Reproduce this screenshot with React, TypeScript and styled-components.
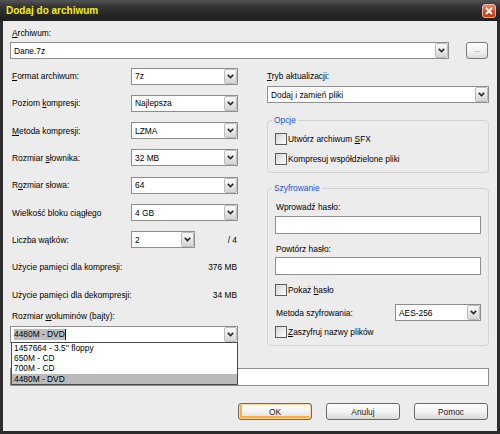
import React from "react";
import styled, { createGlobalStyle } from "styled-components";

const GlobalStyle = createGlobalStyle`
  html, body {
    margin: 0;
    padding: 0;
    background: #fff;
  }
  body {
    font-family: "Liberation Sans", Arial, sans-serif;
    font-size: 8.4px;
    color: #000;
  }
  * {
    box-sizing: border-box;
  }
`;

const Window = styled.div`
  width: 500px;
  height: 434px;
  display: flex;
  flex-direction: column;
  background: #2c2c2c;
`;

const TitleBar = styled.div`
  height: 21px;
  flex: none;
  display: flex;
  align-items: center;
  justify-content: space-between;
  padding: 0 4px 0 6px;
  background: linear-gradient(#545454 0%, #353535 30%, #262626 70%, #1f1f1f 100%);
`;

const Title = styled.span`
  font-size: 10px;
  font-weight: 700;
  color: #f4ee1a;
`;

const CloseButton = styled.span`
  width: 14px;
  height: 14px;
  border-radius: 3px;
  border: 1px solid #f0b4a0;
  background: linear-gradient(#f08a64, #d6451f 60%, #c63a14);
  display: flex;
  align-items: center;
  justify-content: center;
`;

const Body = styled.div`
  flex: 1;
  margin: 0 3px 3px;
  background: #ececec;
  padding: 6px 8px 0 7px;
  display: flex;
  flex-direction: column;
`;

const Caption = styled.div<{ $indent?: number }>`
  height: 12px;
  line-height: 12px;
  white-space: nowrap;
  padding-left: ${(p) => p.$indent ?? 2}px;
`;

const Key = styled.u`
  text-decoration: underline;
  text-underline-offset: 1px;
`;

const ArchiveRow = styled.div`
  margin-top: 3px;
  display: flex;
  align-items: center;
  gap: 17px;
`;

const ComboFrame = styled.div<{ $width?: number }>`
  height: 17px;
  width: ${(p) => (p.$width ? `${p.$width}px` : "100%")};
  flex: none;
  display: flex;
  align-items: center;
  background: #fff;
  border: 1px solid #8e8e8e;
  padding-left: 3px;
`;

const ComboText = styled.span`
  flex: 1;
  line-height: 12px;
  white-space: nowrap;
  overflow: hidden;
  display: flex;
  align-items: center;
`;

const ComboArrow = styled.span`
  width: 13px;
  height: 15px;
  flex: none;
  border: 1px solid #bcbcbc;
  border-radius: 2px;
  background: linear-gradient(#fbfbfb, #e4e4e4 60%, #d4d4d4);
  display: flex;
  align-items: center;
  justify-content: center;
`;

const Selection = styled.span`
  background: #bdbdbd;
  line-height: 11px;
  padding: 0 0 0 1px;
  margin-left: -1px;
`;

const Caret = styled.span`
  width: 1px;
  height: 11px;
  background: #000;
`;

const BrowseButton = styled.div`
  width: 22px;
  height: 17px;
  border: 1px solid #7a7a7a;
  border-radius: 3px;
  background: linear-gradient(#ffffff, #ececec 70%, #d9d9d9);
  display: flex;
  align-items: center;
  justify-content: center;
  color: #555;
  font-size: 7px;
  padding-bottom: 2px;
`;

const Columns = styled.div`
  margin-top: 8px;
  display: grid;
  grid-template-columns: 228px 222px;
  column-gap: 29px;
  align-items: start;
`;

const LeftColumn = styled.div`
  display: flex;
  flex-direction: column;
`;

const SettingList = styled.div`
  display: flex;
  flex-direction: column;
  gap: 9.33px;
`;

const SettingRow = styled.div`
  height: 18px;
  display: grid;
  grid-template-columns: 1fr 107px;
  align-items: center;
`;

const InfoRow = styled.div`
  height: 18px;
  display: flex;
  align-items: center;
  justify-content: space-between;
`;

const ThreadControl = styled.div`
  display: flex;
  align-items: center;
  justify-content: space-between;
`;

const Value = styled.span`
  line-height: 12px;
  white-space: nowrap;
  padding-right: 1px;
`;

const VolumeCaption = styled(Caption)`
  margin-top: 6.3px;
`;

const VolumeField = styled.div`
  margin-top: 4px;
  position: relative;
`;

const DropList = styled.ul`
  position: absolute;
  z-index: 5;
  top: 16px;
  left: 1px;
  right: 0;
  margin: 0;
  padding: 0;
  list-style: none;
  background: #fff;
  border: 1px solid #4a4a4a;
`;

const DropItem = styled.li<{ $selected?: boolean }>`
  height: 10.25px;
  line-height: 10.25px;
  padding-left: 2px;
  white-space: nowrap;
  background: ${(p) => (p.$selected ? "#bababa" : "transparent")};
`;

const RightColumn = styled.div`
  padding-top: 3px;
  display: flex;
  flex-direction: column;
`;

const UpdateCombo = styled.div`
  margin-top: 4px;
`;

const Group = styled.fieldset<{ $gap: number }>`
  margin: ${(p) => p.$gap}px 0 0;
  padding: 7px 7px 7px 7px;
  border: 1px solid #d2d2d2;
  border-radius: 4px;
  min-inline-size: 0;
  display: flex;
  flex-direction: column;
`;

const Legend = styled.legend`
  color: #1e55d6;
  line-height: 12px;
  height: 12px;
  padding: 0 2px;
  margin-left: -3px;
`;

const CheckRow = styled.label<{ $top?: number }>`
  height: 12px;
  margin-top: ${(p) => p.$top ?? 0}px;
  display: flex;
  align-items: center;
  line-height: 12px;
  white-space: nowrap;
`;

const CheckBox = styled.span`
  width: 12px;
  height: 12px;
  flex: none;
  margin-right: 1px;
  border: 1px solid #5b5b5b;
  background: linear-gradient(135deg, #d5d5d5, #f2f2f2 70%, #fdfdfd);
`;

const FieldCaption = styled(Caption)<{ $top?: number }>`
  padding-left: 1px;
  margin-top: ${(p) => p.$top ?? 0}px;
`;

const TextBox = styled.div<{ $top?: number }>`
  height: 18px;
  margin-top: ${(p) => p.$top ?? 0}px;
  background: #fff;
  border: 1px solid #8e8e8e;
`;

const MethodRow = styled.div`
  margin-top: 8px;
  height: 17px;
  display: grid;
  grid-template-columns: 1fr 86px;
  align-items: center;
`;

/* the "Parametry:" caption sits under the open drop-down list */
const ParamsSpacer = styled.div`
  height: 12px;
  margin-top: 6px;
`;

const Footer = styled.div`
  margin-top: 17px;
  padding-right: 1px;
  display: flex;
  justify-content: flex-end;
  gap: 14px;
`;

const Button = styled.div<{ $default?: boolean }>`
  width: 74px;
  height: 17px;
  border: 1px solid #6a6a6a;
  border-radius: 3px;
  background: linear-gradient(#ffffff, #f3f3f3 50%, #e2e2e2 85%, #d3d3d3);
  display: flex;
  align-items: center;
  justify-content: center;
  color: #1a1a1a;
  box-shadow: ${(p) =>
    p.$default ? "inset 0 0 0 1px #fcd79a, inset 1px -1px 0 2px #f5b04a" : "none"};
`;

const Chevron = () => (
  <svg width="7" height="5" viewBox="0 0 7 5">
    <path d="M0.8 0.9 L3.5 3.6 L6.2 0.9" fill="none" stroke="#2a2a2a" strokeWidth="1.6" />
  </svg>
);

const Combo = ({ value, width }: { value: React.ReactNode; width?: number }) => (
  <ComboFrame $width={width}>
    <ComboText>{value}</ComboText>
    <ComboArrow>
      <Chevron />
    </ComboArrow>
  </ComboFrame>
);

const Check = ({ children, top }: { children: React.ReactNode; top?: number }) => (
  <CheckRow $top={top}>
    <CheckBox />
    <span>{children}</span>
  </CheckRow>
);

const volumeSizes = ["1457664 - 3.5'' floppy", "650M - CD", "700M - CD", "4480M - DVD"];

const App = () => {
  return (
    <Window>
      <GlobalStyle />
      <TitleBar>
        <Title>Dodaj do archiwum</Title>
        <CloseButton>
          <svg width="8" height="8" viewBox="0 0 8 8">
            <path d="M1 1 L7 7 M7 1 L1 7" stroke="#fff" strokeWidth="1.8" />
          </svg>
        </CloseButton>
      </TitleBar>
      <Body>
        <Caption>
          <Key>A</Key>rchiwum:
        </Caption>
        <ArchiveRow>
          <Combo value="Dane.7z" width={439} />
          <BrowseButton>...</BrowseButton>
        </ArchiveRow>

        <Columns>
          <LeftColumn>
            <SettingList>
              <SettingRow>
                <Caption>
                  <Key>F</Key>ormat archiwum:
                </Caption>
                <Combo value="7z" />
              </SettingRow>
              <SettingRow>
                <Caption>
                  Poziom <Key>k</Key>ompresji:
                </Caption>
                <Combo value="Najlepsza" />
              </SettingRow>
              <SettingRow>
                <Caption>
                  <Key>M</Key>etoda kompresji:
                </Caption>
                <Combo value="LZMA" />
              </SettingRow>
              <SettingRow>
                <Caption>
                  Rozmiar <Key>s</Key>łownika:
                </Caption>
                <Combo value="32 MB" />
              </SettingRow>
              <SettingRow>
                <Caption>
                  R<Key>o</Key>zmiar słowa:
                </Caption>
                <Combo value="64" />
              </SettingRow>
              <SettingRow>
                <Caption>Wielkość bloku ciągłego</Caption>
                <Combo value="4 GB" />
              </SettingRow>
              <SettingRow>
                <Caption>Liczba wątków:</Caption>
                <ThreadControl>
                  <Combo value="2" width={64} />
                  <Value>/ 4</Value>
                </ThreadControl>
              </SettingRow>
              <InfoRow>
                <Caption>Użycie pamięci dla kompresji:</Caption>
                <Value>376 MB</Value>
              </InfoRow>
              <InfoRow>
                <Caption>Użycie pamięci dla dekompresji:</Caption>
                <Value>34 MB</Value>
              </InfoRow>
            </SettingList>

            <VolumeCaption>
              Rozmiar <Key>w</Key>oluminów (bajty):
            </VolumeCaption>
            <VolumeField>
              <Combo
                value={
                  <>
                    <Selection>4480M - DVD</Selection>
                    <Caret />
                  </>
                }
              />
              <DropList>
                {volumeSizes.map((size, i) => (
                  <DropItem key={size} $selected={i === volumeSizes.length - 1}>
                    {size}
                  </DropItem>
                ))}
              </DropList>
            </VolumeField>
          </LeftColumn>

          <RightColumn>
            <Caption $indent={0}>
              <Key>T</Key>ryb aktualizacji:
            </Caption>
            <UpdateCombo>
              <Combo value="Dodaj i zamień pliki" />
            </UpdateCombo>

            <Group $gap={11}>
              <Legend>Opcje</Legend>
              <Check>
                Utwórz archiwum <Key>S</Key>FX
              </Check>
              <Check top={8}>Kompresuj współdzielone pliki</Check>
            </Group>

            <Group $gap={9}>
              <Legend>Szyfrowanie</Legend>
              <FieldCaption>Wprowadź hasło:</FieldCaption>
              <TextBox $top={3} />
              <FieldCaption $top={9}>Powtórz hasło:</FieldCaption>
              <TextBox $top={2} />
              <Check top={9}>
                Pokaż <Key>h</Key>asło
              </Check>
              <MethodRow>
                <FieldCaption>Metoda szyfrowania:</FieldCaption>
                <Combo value="AES-256" />
              </MethodRow>
              <Check top={5}>
                <Key>Z</Key>aszyfruj nazwy plików
              </Check>
            </Group>
          </RightColumn>
        </Columns>

        <ParamsSpacer />
        <TextBox $top={4} />

        <Footer>
          <Button $default>OK</Button>
          <Button>Anuluj</Button>
          <Button>Pomoc</Button>
        </Footer>
      </Body>
    </Window>
  );
};

export default App;
